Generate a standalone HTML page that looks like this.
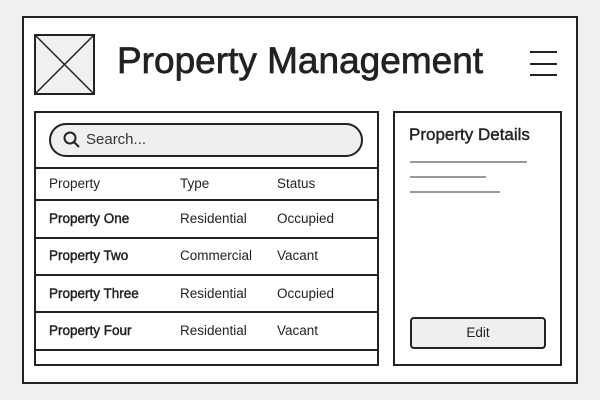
<!DOCTYPE html>
<html><head><style>
*{margin:0;padding:0;box-sizing:border-box}
body{width:600px;height:400px;background:#f0f0f0;position:relative;font-family:"Liberation Sans",sans-serif;color:#222;overflow:hidden}
.a{position:absolute}
.frame{left:22px;top:16px;width:556px;height:368px;border:2px solid #222;background:#fff}
.logo{left:34px;top:34px;width:61px;height:61px;border:2px solid #222;background:#f0f0f0}
.title{left:117px;top:40px;font-size:37px;color:#222;letter-spacing:0;-webkit-text-stroke:0.7px #222}
.hb{left:530px;width:27px;height:2px;background:#222}
.lp{left:34px;top:111px;width:345px;height:255px;border:2px solid #222;background:#fff}
.rp{left:393px;top:111px;width:169px;height:255px;border:2px solid #222;background:#fff}
.search{left:49px;top:123px;width:314px;height:34px;border:2px solid #222;border-radius:17px;background:#efefef}
.hl{left:34px;width:345px;height:2px;background:#222}
.t{font-size:13.5px;color:#222}
.b{-webkit-text-stroke:0.45px #222}
.g{left:410px;height:2px;background:#999}
.edit{left:410px;top:317px;width:136px;height:32px;border:2px solid #222;border-radius:4px;background:#efefef;font-size:13.5px;text-align:center;line-height:28px}
</style></head><body>
<div class="a frame"></div>
<div class="a logo"><svg width="57" height="57" style="display:block"><line x1="0" y1="0" x2="57" y2="57" stroke="#222" stroke-width="1.5"/><line x1="57" y1="0" x2="0" y2="57" stroke="#222" stroke-width="1.5"/></svg></div>
<div class="a title">Property Management</div>
<div class="a hb" style="top:51px"></div>
<div class="a hb" style="top:63px"></div>
<div class="a hb" style="top:74px"></div>
<div class="a lp"></div>
<div class="a rp"></div>
<div class="a search"></div>
<svg class="a" style="left:63px;top:131px" width="18" height="18"><circle cx="7" cy="7" r="5.5" fill="none" stroke="#222" stroke-width="2"/><line x1="11" y1="11" x2="16" y2="16" stroke="#222" stroke-width="2"/></svg>
<div class="a t" style="left:86px;top:131px;font-size:15px;color:#333">Search...</div>
<div class="a hl" style="top:167px"></div>
<div class="a t" style="left:49px;top:176px">Property</div>
<div class="a t" style="left:180px;top:176px">Type</div>
<div class="a t" style="left:277px;top:176px">Status</div>
<div class="a hl" style="top:199px"></div>
<div class="a t b" style="left:49px;top:211px">Property One</div>
<div class="a t" style="left:180px;top:211px">Residential</div>
<div class="a t" style="left:277px;top:211px">Occupied</div>
<div class="a hl" style="top:237px"></div>
<div class="a t b" style="left:49px;top:248px">Property Two</div>
<div class="a t" style="left:180px;top:248px">Commercial</div>
<div class="a t" style="left:277px;top:248px">Vacant</div>
<div class="a hl" style="top:274px"></div>
<div class="a t b" style="left:49px;top:286px">Property Three</div>
<div class="a t" style="left:180px;top:286px">Residential</div>
<div class="a t" style="left:277px;top:286px">Occupied</div>
<div class="a hl" style="top:311px"></div>
<div class="a t b" style="left:49px;top:323px">Property Four</div>
<div class="a t" style="left:180px;top:323px">Residential</div>
<div class="a t" style="left:277px;top:323px">Vacant</div>
<div class="a hl" style="top:349px"></div>
<div class="a" style="left:409px;top:125px;font-size:17px;color:#222;-webkit-text-stroke:0.4px #222">Property Details</div>
<div class="a g" style="top:161px;width:117px"></div>
<div class="a g" style="top:176px;width:76px"></div>
<div class="a g" style="top:191px;width:90px"></div>
<div class="a edit">Edit</div>
</body></html>
